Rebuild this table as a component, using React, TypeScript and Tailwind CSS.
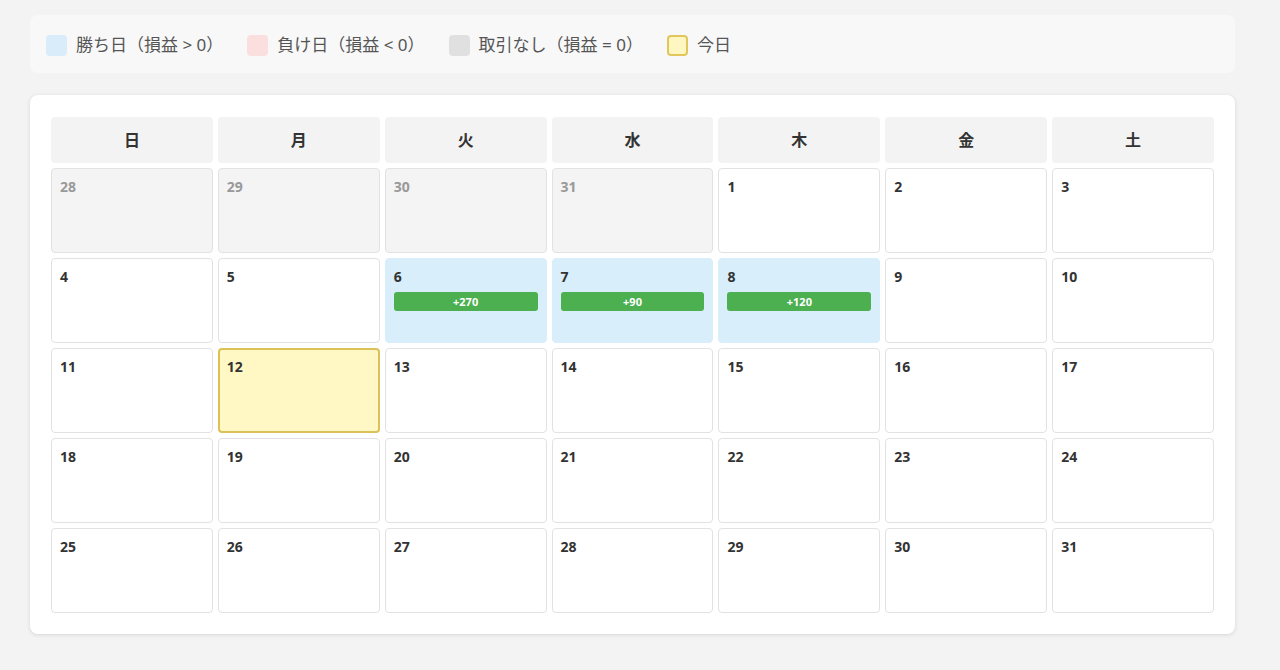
import React from "react";

type Day = {
  n: number;
  other?: boolean;
  today?: boolean;
  pnl?: number;
};

const weekdays = ["日", "月", "火", "水", "木", "金", "土"];

const pnl: Record<number, number> = { 6: 270, 7: 90, 8: 120 };

const days: Day[] = [
  ...[28, 29, 30, 31].map((n) => ({ n, other: true })),
  ...Array.from({ length: 31 }, (_, i) => ({
    n: i + 1,
    today: i + 1 === 12,
    pnl: pnl[i + 1],
  })),
];

const LegendItem = ({ box, label }: { box: string; label: string }) => (
  <div className="flex items-center gap-[9px]">
    <span className={`w-[21px] h-[21px] rounded-[4px] ${box}`} />
    <span className="text-[17px] text-[#555]">{label}</span>
  </div>
);

const DayCell = ({ d }: { d: Day }) => {
  let cls = "bg-white border border-[#e2e2e2]";
  if (d.other) cls = "bg-[#f4f4f4] border border-[#e2e2e2]";
  if (d.pnl && d.pnl > 0) cls = "bg-[#d8eefb] border border-[#d8eefb]";
  if (d.today) cls = "bg-[#fff8c4] border-2 border-[#dcc159]";

  return (
    <div className={`h-[85px] rounded-[4px] px-[8px] pt-[9px] ${cls}`}>
      <div
        className={`text-[14px] font-bold leading-[18px] ${
          d.other ? "text-[#999]" : "text-[#333]"
        } ${d.today ? "-mx-px -mt-px" : ""}`}
      >
        {d.n}
      </div>
      {d.pnl !== undefined && (
        <div className="mt-[6px] h-[19px] rounded-[3px] bg-[#4caf50] text-white text-[11px] font-bold leading-[19px] text-center">
          +{d.pnl}
        </div>
      )}
    </div>
  );
};

export default function App() {
  return (
    <div
      className="min-h-[670px] bg-[#f3f3f3] pt-[15px] pl-[30px]"
      style={{ fontFamily: '"Noto Sans", "Noto Sans CJK JP", sans-serif' }}
    >
      <div className="w-[1205px]">
        <div className="h-[58px] rounded-[8px] bg-[#f8f8f8] flex items-center gap-[24px] px-[16px] pt-[2px]">
          <LegendItem box="bg-[#d8ecfa]" label="勝ち日（損益 > 0）" />
          <LegendItem box="bg-[#fbdede]" label="負け日（損益 < 0）" />
          <LegendItem box="bg-[#e0e0e0]" label="取引なし（損益 = 0）" />
          <LegendItem
            box="bg-[#fff7c2] border-2 border-[#e2c65c]"
            label="今日"
          />
        </div>

        <div className="mt-[22px] rounded-[8px] bg-white shadow-[0_1px_4px_rgba(0,0,0,0.12)] px-[21px] pt-[22px] pb-[21px]">
          <div className="grid grid-cols-7 gap-[5px]">
            {weekdays.map((w) => (
              <div
                key={w}
                className="h-[46px] rounded-[4px] bg-[#f3f3f3] flex items-center justify-center text-[16px] font-bold text-[#333]"
              >
                {w}
              </div>
            ))}
            {days.map((d, i) => (
              <DayCell key={i} d={d} />
            ))}
          </div>
        </div>
      </div>
    </div>
  );
}
